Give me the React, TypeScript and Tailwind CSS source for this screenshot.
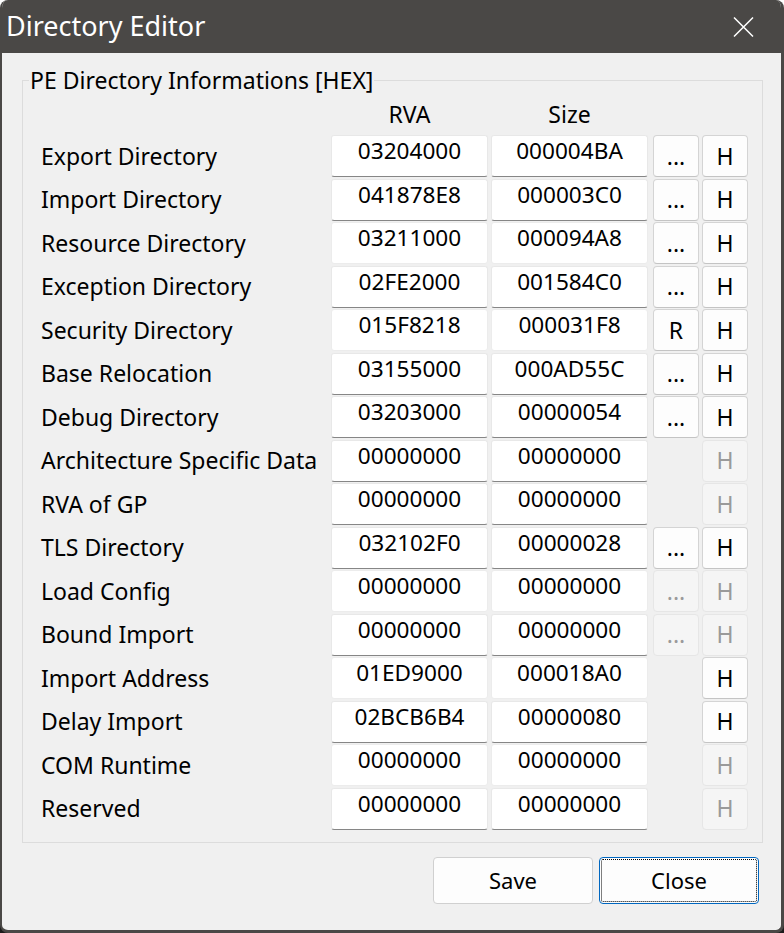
import React from "react";

type Row = {
  name: string;
  rva: string;
  size: string;
  extra: "dots" | "R" | "dotsOff" | null;
  h: boolean;
  line: boolean;
};

const rows: Row[] = [
  { name: "Export Directory", rva: "03204000", size: "000004BA", extra: "dots", h: true, line: true },
  { name: "Import Directory", rva: "041878E8", size: "000003C0", extra: "dots", h: true, line: true },
  { name: "Resource Directory", rva: "03211000", size: "000094A8", extra: "dots", h: true, line: false },
  { name: "Exception Directory", rva: "02FE2000", size: "001584C0", extra: "dots", h: true, line: true },
  { name: "Security Directory", rva: "015F8218", size: "000031F8", extra: "R", h: true, line: false },
  { name: "Base Relocation", rva: "03155000", size: "000AD55C", extra: "dots", h: true, line: true },
  { name: "Debug Directory", rva: "03203000", size: "00000054", extra: "dots", h: true, line: true },
  { name: "Architecture Specific Data", rva: "00000000", size: "00000000", extra: null, h: false, line: true },
  { name: "RVA of GP", rva: "00000000", size: "00000000", extra: null, h: false, line: true },
  { name: "TLS Directory", rva: "032102F0", size: "00000028", extra: "dots", h: true, line: true },
  { name: "Load Config", rva: "00000000", size: "00000000", extra: "dotsOff", h: false, line: false },
  { name: "Bound Import", rva: "00000000", size: "00000000", extra: "dotsOff", h: false, line: true },
  { name: "Import Address", rva: "01ED9000", size: "000018A0", extra: null, h: true, line: false },
  { name: "Delay Import", rva: "02BCB6B4", size: "00000080", extra: null, h: true, line: true },
  { name: "COM Runtime", rva: "00000000", size: "00000000", extra: null, h: false, line: false },
  { name: "Reserved", rva: "00000000", size: "00000000", extra: null, h: false, line: true },
];

function Field({ value, line }: { value: string; line: boolean }) {
  return (
    <div
      className={
        "w-[157px] h-full rounded-[3px] border bg-white text-center text-[22.6px] leading-[28px] pt-[1px] " +
        (line ? "border-[#e8e8e8] border-b-[#868686]" : "border-[#ececec]")
      }
    >
      {value}
    </div>
  );
}

function SmallButton({ label, enabled }: { label: string; enabled: boolean }) {
  return (
    <button
      className={
        "w-[46px] h-full rounded-[4px] border text-[23px] leading-none " +
        (enabled
          ? "bg-[#fdfdfd] border-[#d4d4d4] border-b-[#c4c4c4] text-black"
          : "bg-[#f5f5f5] border-[#e6e6e6] text-[#9a9a9a]")
      }
    >
      {label}
    </button>
  );
}

export default function App() {
  return (
    <div
      className="w-[784px] h-[933px] bg-[linear-gradient(to_bottom,#ffffff_50%,#1c1c1c_50%)] text-black"
      style={{ fontFamily: '"Noto Sans", "Open Sans", sans-serif' }}
    >
      <div className="w-full h-full flex flex-col rounded-[8px] overflow-hidden border-l-2 border-r-[3px] border-b-[3px] border-[#4a4846] bg-[#f0f0f0]">
        {/* title bar */}
        <div className="h-[53px] shrink-0 bg-[#4a4846] flex items-center justify-between pl-[4px] pr-[27px]">
          <span className="text-white text-[27px] leading-none pb-[2px]">Directory Editor</span>
          <svg width="21" height="20" viewBox="0 0 21 20" className="mt-[1px]">
            <path d="M1 0.5 L20 19.5 M20 0.5 L1 19.5" stroke="#ffffff" strokeWidth="1.5" fill="none" />
          </svg>
        </div>

        {/* body */}
        <div className="flex-1 flex flex-col pl-[20px] pr-[18px] pt-[13px]">
          <fieldset className="border border-[#dcdcdc]">
            <legend className="ml-[6px] px-[1px] text-[23px] leading-[28px]">PE Directory Informations [HEX]</legend>

            <div className="pl-[18px] pr-[13px] pb-[12px]">
              <div className="flex h-[41px] text-[23px] leading-[30px] pt-[5px]">
                <div className="w-[290px]" />
                <div className="w-[157px] text-center">RVA</div>
                <div className="w-[3px]" />
                <div className="w-[157px] text-center">Size</div>
              </div>

              <div className="flex flex-col gap-[1.5px]">
                {rows.map((r) => (
                  <div key={r.name} className="flex h-[42px] items-stretch">
                    <div className="w-[290px] text-[23px] flex items-center">{r.name}</div>
                    <div className="flex gap-[3px]">
                      <Field value={r.rva} line={r.line} />
                      <Field value={r.size} line={r.line} />
                    </div>
                    <div className="flex gap-[3px] ml-[5px]">
                      {r.extra === "dots" && <SmallButton label="..." enabled />}
                      {r.extra === "R" && <SmallButton label="R" enabled />}
                      {r.extra === "dotsOff" && <SmallButton label="..." enabled={false} />}
                      {r.extra === null && <div className="w-[46px]" />}
                      <SmallButton label="H" enabled={r.h} />
                    </div>
                  </div>
                ))}
              </div>
            </div>
          </fieldset>

          <div className="flex justify-end gap-[6px] mt-[14px] pr-[4px]">
            <button className="w-[160px] h-[47px] rounded-[4px] border border-[#d0d0d0] bg-[#fdfdfd] text-[22px]">
              Save
            </button>
            <button className="w-[160px] h-[47px] rounded-[4px] border border-[#0067c0] bg-[#fdfdfd] text-[22px] outline-1 outline-dotted outline-black outline-offset-[-3px]">
              Close
            </button>
          </div>
        </div>
      </div>
    </div>
  );
}
